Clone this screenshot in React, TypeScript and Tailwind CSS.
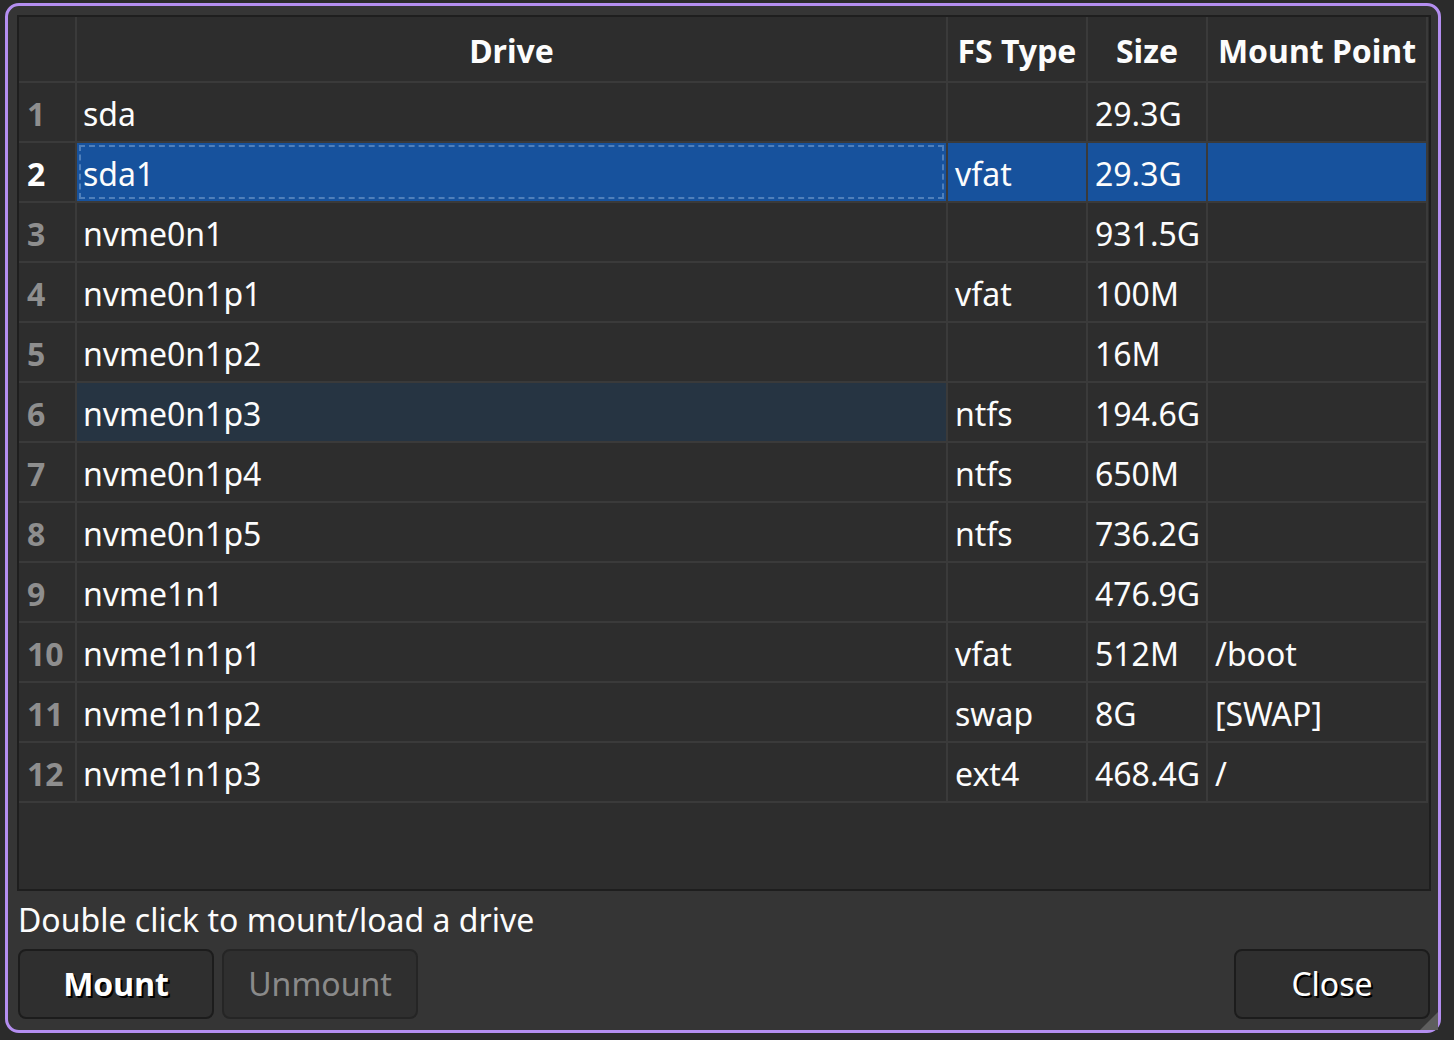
import React from "react";

const rows: [string, string, string, string][] = [
  ["sda", "", "29.3G", ""],
  ["sda1", "vfat", "29.3G", ""],
  ["nvme0n1", "", "931.5G", ""],
  ["nvme0n1p1", "vfat", "100M", ""],
  ["nvme0n1p2", "", "16M", ""],
  ["nvme0n1p3", "ntfs", "194.6G", ""],
  ["nvme0n1p4", "ntfs", "650M", ""],
  ["nvme0n1p5", "ntfs", "736.2G", ""],
  ["nvme1n1", "", "476.9G", ""],
  ["nvme1n1p1", "vfat", "512M", "/boot"],
  ["nvme1n1p2", "swap", "8G", "[SWAP]"],
  ["nvme1n1p3", "ext4", "468.4G", "/"],
];

const cell = "border-r-2 border-b-2 border-[#3a3a3a] flex items-center pt-[3px]";

export default function App() {
  return (
    <div
      className="w-[1454px] h-[1040px] bg-[#2b2b2b] pt-[3px] pl-[5px] overflow-hidden"
      style={{ fontFamily: '"Noto Sans", "Open Sans", sans-serif' }}
    >
      <div className="relative w-[1436px] h-[1030px] border-[3px] border-[#b48ef0] rounded-[14px] bg-[#353535] pt-[9px] pl-[9px] pr-[7px] pb-[11px] flex flex-col">
        {/* table frame */}
        <div className="h-[876px] shrink-0 border-2 border-[#1e1e1e] bg-[#2d2d2d] flex flex-col">
          <div className="grid grid-cols-[58px_871px_140px_120px_220px] text-[32px] text-[#fcfcfc]">
            {/* header */}
            <div className={`${cell} h-[66px]`} />
            <div className={`${cell} h-[66px] justify-center font-bold`}>Drive</div>
            <div className={`${cell} h-[66px] justify-center font-bold`}>FS Type</div>
            <div className={`${cell} h-[66px] justify-center font-bold`}>Size</div>
            <div className={`${cell} h-[66px] justify-center font-bold`}>Mount Point</div>
            {rows.map((r, i) => {
              const sel = i === 1;
              const hover = i === 5;
              const bg = sel ? "bg-[#17529d]" : "";
              return (
                <React.Fragment key={i}>
                  <div
                    className={`${cell} h-[60px] pl-[8px] font-bold ${
                      sel ? "text-[#ffffff]" : "text-[#8e8e8e]"
                    }`}
                  >
                    {i + 1}
                  </div>
                  <div
                    className={`${cell} h-[60px] relative pl-[6px] ${bg} ${
                      hover ? "bg-[#263442]" : ""
                    }`}
                  >
                    {sel && (
                      <div className="absolute left-[2px] top-[2px] right-[2px] bottom-[2px] border-2 border-dashed border-[#4f7fba]" />
                    )}
                    <span className="relative">{r[0]}</span>
                  </div>
                  <div className={`${cell} h-[60px] pl-[7px] ${bg}`}>{r[1]}</div>
                  <div className={`${cell} h-[60px] pl-[7px] ${bg}`}>{r[2]}</div>
                  <div className={`${cell} h-[60px] pl-[7px] ${bg}`}>{r[3]}</div>
                </React.Fragment>
              );
            })}
          </div>
        </div>
        {/* status */}
        <div className="h-[58px] shrink-0 flex items-center text-[32px] text-[#fcfcfc] pl-[1px]">
          Double click to mount/load a drive
        </div>
        {/* buttons */}
        <div className="flex items-center gap-[8px] pl-[1px] pr-[1px]">
          <button className="w-[196px] h-[70px] rounded-[8px] border-2 border-[#1c1c1c] bg-[#2f2f2f] text-[32px] font-bold text-white [text-shadow:2px_2px_0_#000]">
            Mount
          </button>
          <button className="w-[196px] h-[70px] rounded-[8px] border-2 border-[#252525] bg-[#2f2f2f] text-[32px] text-[#8a8a8a]">
            Unmount
          </button>
          <div className="flex-1" />
          <button className="w-[196px] h-[70px] rounded-[8px] border-2 border-[#1c1c1c] bg-[#2f2f2f] text-[32px] text-white [text-shadow:2px_2px_0_#000]">
            Close
          </button>
        </div>
        {/* resize grip */}
        <svg
          className="absolute right-[0px] bottom-[0px]"
          width="20"
          height="20"
          viewBox="0 0 20 20"
        >
          <polygon points="20,2 20,20 2,20" fill="#5e5e5e" />
        </svg>
      </div>
    </div>
  );
}
